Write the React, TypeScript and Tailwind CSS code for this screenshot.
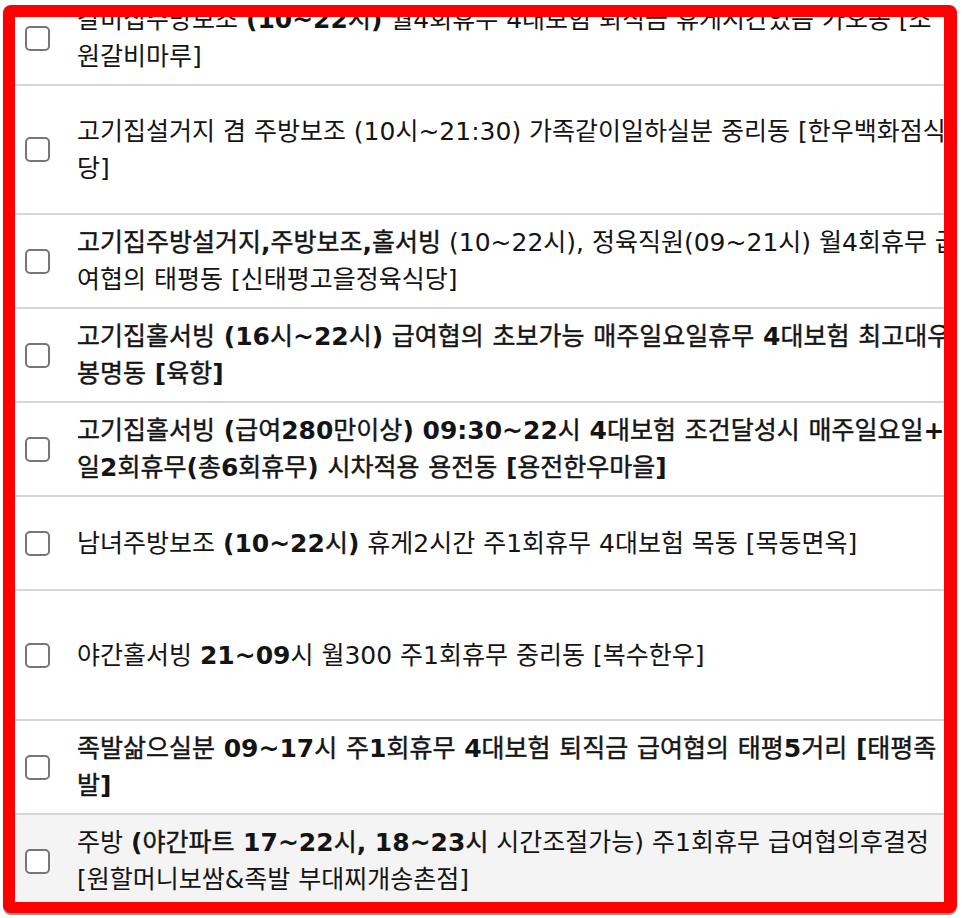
import React from "react";

type Seg = [string, boolean];
type Row = { h: string; bg: string; lines: Seg[][] };

const HANGUL = /([\uAC00-\uD7A3]+)/;

function renderSeg(seg: Seg, key: number) {
  const [text, bold] = seg;
  if (!bold) return <span key={key}>{text}</span>;
  const parts = text.split(HANGUL).filter((p) => p.length > 0);
  return (
    <span key={key}>
      {parts.map((p, i) =>
        /[\uAC00-\uD7A3]/.test(p) ? (
          <span key={i} className="font-normal [-webkit-text-stroke:0.45px_#1a1a1a]">
            {p}
          </span>
        ) : (
          <span key={i} className="font-bold">
            {p}
          </span>
        )
      )}
    </span>
  );
}

const rows: Row[] = [
  {
    h: "h-[94px]",
    bg: "bg-white",
    lines: [
      [
        ["갈비집주방보조 ", false],
        ["(10~22시)", true],
        [" 월4회휴무 4대보험 퇴직금 휴게시간있음 가오동 [조", false],
      ],
      [["원갈비마루]", false]],
    ],
  },
  {
    h: "h-[129px]",
    bg: "bg-white",
    lines: [
      [["고기집설거지 겸 주방보조 (10시~21:30) 가족같이일하실분 중리동 [한우백화점식", false]],
      [["당]", false]],
    ],
  },
  {
    h: "h-[94px]",
    bg: "bg-white",
    lines: [
      [
        ["고기집주방설거지,주방보조,홀서빙", true],
        [" (10~22시), 정육직원(09~21시) 월4회휴무 급", false],
      ],
      [["여협의 태평동 [신태평고을정육식당]", false]],
    ],
  },
  {
    h: "h-[94px]",
    bg: "bg-white",
    lines: [
      [["고기집홀서빙 (16시~22시) 급여협의 초보가능 매주일요일휴무 4대보험 최고대우", true]],
      [["봉명동 [육항]", true]],
    ],
  },
  {
    h: "h-[94px]",
    bg: "bg-white",
    lines: [
      [["고기집홀서빙 (급여280만이상) 09:30~22시 4대보험 조건달성시 매주일요일+평", true]],
      [["일2회휴무(총6회휴무) 시차적용 용전동 [용전한우마을]", true]],
    ],
  },
  {
    h: "h-[94px]",
    bg: "bg-white",
    lines: [
      [
        ["남녀주방보조 ", false],
        ["(10~22시)", true],
        [" 휴게2시간 주1회휴무 4대보험 목동 [목동면옥]", false],
      ],
    ],
  },
  {
    h: "h-[130px]",
    bg: "bg-white",
    lines: [
      [
        ["야간홀서빙 ", false],
        ["21~09", true],
        ["시 월300 주1회휴무 중리동 [복수한우]", false],
      ],
    ],
  },
  {
    h: "h-[94px]",
    bg: "bg-white",
    lines: [
      [["족발삶으실분 09~17시 주1회휴무 4대보험 퇴직금 급여협의 태평5거리 [태평족", true]],
      [["발]", true]],
    ],
  },
  {
    h: "h-[94px]",
    bg: "bg-[#f4f4f4]",
    lines: [
      [
        ["주방 ", false],
        ["(야간파트 17~22시, 18~23시", true],
        [" 시간조절가능) 주1회휴무 급여협의후결정", false],
      ],
      [["[원할머니보쌈&족발 부대찌개송촌점]", false]],
    ],
  },
];

export default function App() {
  return (
    <div
      className="w-[962px] h-[918px] bg-white overflow-hidden pt-[5px] pl-[3px]"
      style={{ fontFamily: '"DejaVu Sans", "Noto Sans CJK KR", sans-serif' }}
    >
      <div className="w-[954px] h-[908px] border-solid border-[#ff0000] border-l-[12px] border-t-[12px] border-r-[13px] border-b-[11px] rounded-[8px] overflow-hidden bg-white shadow-[0_2px_1px_rgba(0,0,0,0.45)]">
        <div className="-mt-[25px] w-[1100px]">
          {rows.map((r, i) => (
            <div
              key={i}
              className={`${r.h} ${r.bg} flex items-center border-b-2 border-[#d6d6d6] pl-[10px]`}
            >
              <div className="w-[25px] h-[25px] shrink-0 rounded-[5px] border-2 border-[#767676] bg-white" />
              <div className="ml-[27px] whitespace-nowrap text-[25px] leading-[37px] text-[#141414]">
                {r.lines.map((line, li) => (
                  <div key={li}>{line.map((s, si) => renderSeg(s, si))}</div>
                ))}
              </div>
            </div>
          ))}
        </div>
      </div>
    </div>
  );
}
